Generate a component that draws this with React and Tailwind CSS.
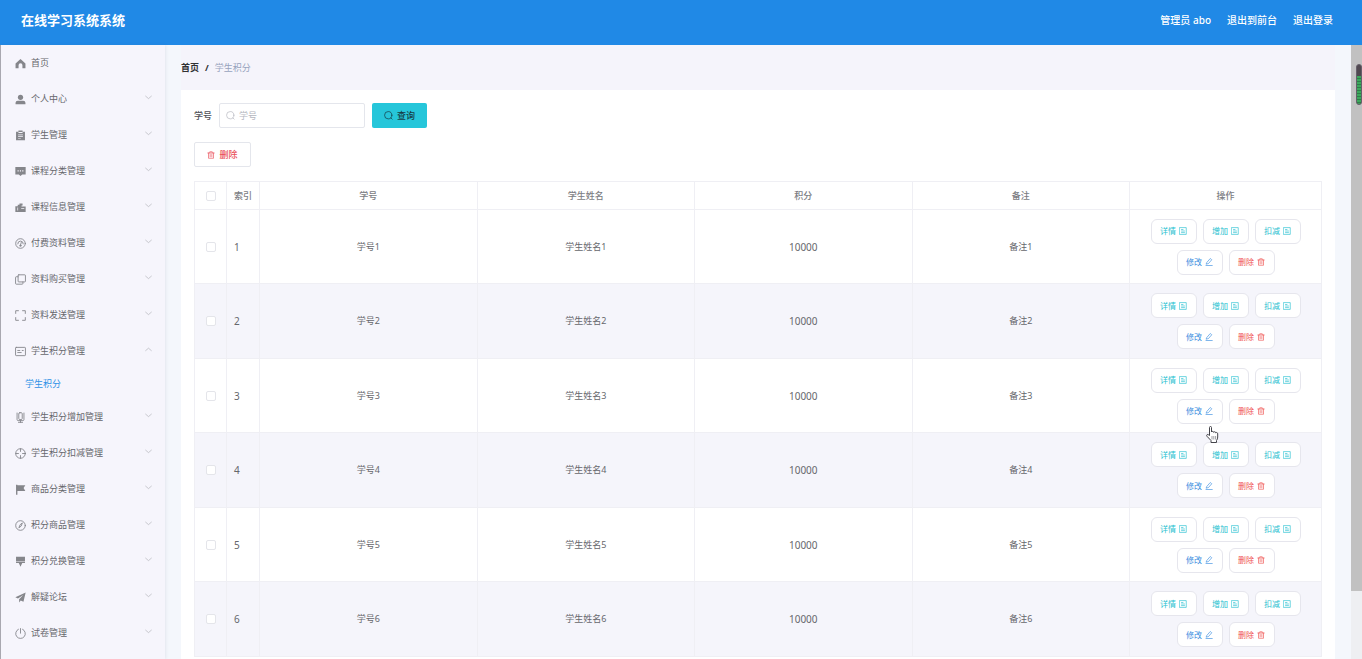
import React from "react";

const line = { fill: "none", stroke: "currentColor", strokeWidth: 1.3, strokeLinecap: "round", strokeLinejoin: "round" };

const icons = {
  home: <path fill="currentColor" d="M8 1.500.8 8v6.800h4.400V10.500a2.800 2.800 0 0 1 5.600 0v4.300h4.400V8z" />,
  user: (
    <g fill="currentColor">
      <circle cx="8" cy="4.800" r="3.800" />
      <path d="M.8 14.800v-2a3.200 3.200 0 0 1 3.200-3h8a3.200 3.200 0 0 1 3.200 3v2z" />
    </g>
  ),
  order: (
    <path fill="currentColor" fillRule="evenodd" d="M1.500 2.500H5V.8h6v1.700h3.500V15h-13zM5 4.200h6V2.800H5zM4.500 6.500v1h7v-1zm0 2.700v1h7v-1zm0 2.700v1h4v-1z" />
  ),
  comment: (
    <path fill="currentColor" fillRule="evenodd" d="M.5 1.500h15v11H10.500L8 14.500l-2.500-2H.5zM3.700 6v2h1.700V6zm3.400 0v2h1.700V6zm3.400 0v2h1.700V6z" />
  ),
  shop: (
    <path fill="currentColor" fillRule="evenodd" d="M.5 6H4V4h2.500V2H11v3h-1.500v1.500h6V14.500H.5zM9 9v1h4.500V9zM3.500 8v4.500h1V8z" />
  ),
  odometer: (
    <g {...line}>
      <circle cx="8" cy="8" r="7" />
      <path d="M4 8.500a4 4 0 0 1 8 0M7.800 11l1.300-4.500" />
      <circle cx="7.800" cy="11.200" r="1" />
    </g>
  ),
  copy: (
    <g {...line}>
      <rect x="4.500" y="1.200" width="10.700" height="10.300" rx="1" />
      <path d="M4.500 4H1.800a1 1 0 0 0-1 1v8.800a1 1 0 0 0 1 1h8.700a1 1 0 0 0 1-1v-2.300" />
    </g>
  ),
  full: <path {...line} d="M1 5V1h4M11 1h4v4M15 11v4h-4M5 15H1v-4" />,
  card: (
    <g {...line}>
      <rect x=".8" y="2" width="14.400" height="12" rx="1" />
      <path d="M4 6.500h3M4 9.500h5M10.500 6.500h1.500" />
    </g>
  ),
  mic: (
    <g {...line}>
      <rect x="5.500" y="1" width="5" height="10" rx="1.500" />
      <path d="M3 1.500V11q0 1.500 1.500 1.500h7Q13 12.500 13 11V1.500M8 12.500V15M5 15h6" />
    </g>
  ),
  aim: (
    <g {...line}>
      <circle cx="8" cy="8" r="7" />
      <path d="M8 1v4M8 11v4M1 8h4M11 8h4" />
    </g>
  ),
  flag: <path fill="currentColor" d="M1.500 1h2v.8H15l-2.500 4 2.500 4.400H3.500V15.500h-2z" />,
  compass: (
    <g {...line}>
      <circle cx="8" cy="8" r="7" />
      <path d="m10.500 4.800-1.500 4-3.400 2.600 1.600-4z" />
    </g>
  ),
  brush: <path fill="currentColor" fillRule="evenodd" d="M1.500 1h13v6.500h-13zM1.500 8.500h13V10H10.500L8 15.500 5.500 10h-4z" />,
  plane: <path fill="currentColor" d="M15.500.8.5 7.800l3.800 1.800L12 4.500 6 10.700V15.200l2.300-3 4 1.800z" />,
  power: <path {...line} d="M8 .8v6.700M5 1.800a7 7 0 1 0 6 0" />,
  search: (
    <g {...line}>
      <circle cx="7.500" cy="7.500" r="6.500" />
      <path d="m12.300 12.300 2.200 2.200" />
    </g>
  ),
  trash: <path {...line} d="M1.500 4h13M5.500 4V1.500h5V4M3 4v10.500h10V4M6.300 7v4.500M9.700 7v4.500" />,
  doc: (
    <g {...line}>
      <rect x="1.500" y="1.200" width="13" height="13.600" />
      <path d="M5 5h3M5 8h6M5 11.200h6" />
    </g>
  ),
  edit: <path {...line} d="m4 8.500 6.500-7.500 3 2.500L7 11l-4 1.200zM2 15h12.500" />,
  down: <path {...line} d="m1.500 5 6.500 5.500L14.500 5" />,
  up: <path {...line} d="m1.500 10.500 6.500-5.500 6.500 5.500" />,
};

function Icon({ name, className }) {
  return (
    <svg viewBox="0 0 16 16" aria-hidden="true" className={`shrink-0 ${className}`}>
      {icons[name]}
    </svg>
  );
}

const menu = [
  ["home", "首页"],
  ["user", "个人中心"],
  ["order", "学生管理"],
  ["comment", "课程分类管理"],
  ["shop", "课程信息管理"],
  ["odometer", "付费资料管理"],
  ["copy", "资料购买管理"],
  ["full", "资料发送管理"],
  ["card", "学生积分管理", ["学生积分"]],
  ["mic", "学生积分增加管理"],
  ["aim", "学生积分扣减管理"],
  ["flag", "商品分类管理"],
  ["compass", "积分商品管理"],
  ["brush", "积分兑换管理"],
  ["plane", "解疑论坛"],
  ["power", "试卷管理"],
];

const rows = [1, 2, 3, 4, 5, 6];

const actions = [
  ["详情", "doc", "text-[#26bfd0]"],
  ["增加", "doc", "text-[#26bfd0]"],
  ["扣减", "doc", "text-[#26bfd0]"],
  ["修改", "edit", "text-[#3a8ee0]"],
  ["删除", "trash", "text-[#ef5350]"],
];

function Sidebar() {
  return (
    <nav className="w-[165px] shrink-0 border-l border-[#a9a8b0] bg-[#f6f5fc] shadow-[1px_0_3px_rgba(90,90,120,0.10)]">
      <ul>
        {menu.map(([icon, label, children]) => (
          <li key={label}>
            <button type="button" className="flex h-9 w-full items-center pr-[13px] pl-3.5 text-[#66676c]">
              <Icon name={icon} className="mr-[5px] size-[11px] text-[#85868b]" />
              <span>{label}</span>
              {label !== "首页" && (
                <Icon name={children ? "up" : "down"} className="mb-1 ml-auto size-[7px] text-[#a5a6ac]" />
              )}
            </button>
            {children?.map((c) => (
              <a key={c} href="#points" className="flex h-[30px] items-center pl-6 text-[#2e92e6]">
                {c}
              </a>
            ))}
          </li>
        ))}
      </ul>
    </nav>
  );
}

function Check({ label }) {
  return (
    <input
      type="checkbox"
      aria-label={label}
      className="mx-auto block size-[10px] appearance-none rounded-[2px] border border-[#e4e5ea] bg-white"
    />
  );
}

function PointsTable() {
  const cell = "border-r border-b border-[#efeff4] p-0";
  return (
    <table className="mt-3.5 w-full table-fixed border-separate border-spacing-0 border-t border-l border-[#efeff4] text-center text-[#66676c]">
      <colgroup>
        <col className="w-8" />
        <col className="w-[33px]" />
        <col />
        <col />
        <col />
        <col />
        <col className="w-48" />
      </colgroup>
      <thead>
        <tr className="h-7 text-[#7c7d83]">
          <th className={cell}>
            <Check label="全选" />
          </th>
          {["索引", "学号", "学生姓名", "积分", "备注", "操作"].map((h) => (
            <th key={h} className={`${cell} font-medium`}>
              {h}
            </th>
          ))}
        </tr>
      </thead>
      <tbody>
        {rows.map((n) => (
          <tr key={n} className="odd:h-[74px] even:h-[75px] even:bg-[#f5f5fb]">
            <td className={cell}>
              <Check label={`选择${n}`} />
            </td>
            <td className={`${cell} pl-[7px] text-left text-[10px]`}>{n}</td>
            <td className={cell}>学号{n}</td>
            <td className={cell}>学生姓名{n}</td>
            <td className={`${cell} text-[10px]`}>10000</td>
            <td className={cell}>备注{n}</td>
            <td className={cell}>
              <div className="flex flex-wrap justify-center gap-1.5 px-3">
                {actions.map(([label, icon, color]) => (
                  <button
                    key={label}
                    type="button"
                    className={`flex h-[25px] w-[46px] items-center justify-center gap-[3px] rounded-md border border-[#e6e6ed] bg-white text-[8px] ${color}`}
                  >
                    {label}
                    <Icon name={icon} className="size-[8px]" />
                  </button>
                ))}
              </div>
            </td>
          </tr>
        ))}
      </tbody>
    </table>
  );
}

function Scrollbar() {
  return (
    <div className="relative flex w-[11px] shrink-0 flex-col bg-[#eeeff2]" aria-hidden="true">
      <div className="h-[89%] bg-[#c1c1c1]" />
      <div className="absolute top-[19px] right-0 flex h-[41px] w-[6px] flex-col overflow-hidden rounded-full border border-[#66606a] bg-[#504850]">
        <div className="mt-auto h-7 bg-[repeating-linear-gradient(#3ca85c_0_2px,#2f7d48_2px_3px)]" />
      </div>
    </div>
  );
}

export default function App() {
  return (
    <div className="relative flex h-screen flex-col overflow-hidden bg-[#f4f7fc] font-['Noto_Sans','Noto_Sans_CJK_SC',sans-serif] text-[9px] leading-[14px]">
      <header className="flex h-[45px] shrink-0 items-center justify-between bg-[#2089e6] pr-[29px] pb-1.5 pl-[21px] text-white">
        <h1 className="text-[13px] leading-5 font-bold">在线学习系统系统</h1>
        <div className="flex gap-4 text-[10px] font-medium">
          <span>管理员 abo</span>
          <a href="#front">退出到前台</a>
          <a href="#logout">退出登录</a>
        </div>
      </header>
      <div className="flex min-h-0 flex-1">
        <Sidebar />
        <main className="flex min-w-0 flex-1 flex-col px-4">
          <nav aria-label="面包屑" className="flex h-[45px] shrink-0 items-center gap-1.5 bg-[#f5f4fb]">
            <a href="#home" className="font-bold text-[#303133]">
              首页
            </a>
            <span className="font-bold text-[#303133]">/</span>
            <span className="text-[#97a3bd]">学生积分</span>
          </nav>
          <section className="min-h-0 flex-1 overflow-hidden bg-white px-[13px] pt-[13px]">
            <form className="flex h-[25px] items-center" onSubmit={(e) => e.preventDefault()}>
              <label htmlFor="sid" className="mr-[7px] font-medium text-[#505157]">
                学号
              </label>
              <div className="mr-[7px] flex h-full w-[146px] items-center gap-1 rounded-[2px] border border-[#e4e6ec] pl-1.5">
                <Icon name="search" className="size-[9px] text-[#b9bbc3]" />
                <input id="sid" placeholder="学号" className="w-full min-w-0 outline-none placeholder:text-[#b4b6be]" />
              </div>
              <button
                type="submit"
                className="flex h-full w-[55px] items-center justify-center gap-1 rounded-[2px] bg-[#26c6da] font-medium text-[#173f48]"
              >
                <Icon name="search" className="size-[9px]" />
                查询
              </button>
            </form>
            <button
              type="button"
              className="mt-3.5 flex h-[25px] w-[57px] items-center justify-center gap-1 rounded-[2px] border border-[#e4e6ec] font-medium text-[#ea4f5a]"
            >
              <Icon name="trash" className="size-[8px]" />
              删除
            </button>
            <PointsTable />
          </section>
        </main>
        <Scrollbar />
      </div>
      <svg viewBox="0 0 13 17" aria-hidden="true" className="absolute top-[426px] left-[1206px] h-[17px] w-[13px]">
        <path
          fill="#fff"
          stroke="#44444a"
          strokeLinejoin="round"
          d="M3.500 9.500v-8q0-1 1-1t1 1v4.500q.3-.8 1.200-.6.900.100.900.900.400-.7 1.200-.5.900.200.900 1 .500-.500 1.200-.2.800.300.800 1.200V11q0 2-1.200 3.500v2H5v-2L1 10.300Q.3 9.200 1 8.700q.8-.5 1.500.1z"
        />
        <path fill="none" stroke="#77777d" strokeWidth=".7" d="M6 10v3.500M7.800 10v3.500M9.600 10v3.500" />
      </svg>
    </div>
  );
}
